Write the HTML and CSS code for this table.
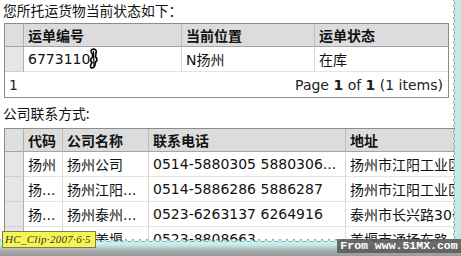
FILE: index.html
```html
<!DOCTYPE html>
<html>
<head>
<meta charset="utf-8">
<link rel="stylesheet" href="styles.css">
</head>
<body>
<div class="sheet">
  <div class="caption">您所托运货物当前状态如下：</div>
  <table class="grid g1">
    <colgroup><col class="c-ind"><col class="c-1a"><col class="c-1b"><col class="c-1c"></colgroup>
    <thead>
      <tr><th class="ind"></th><th>运单编号</th><th>当前位置</th><th>运单状态</th></tr>
    </thead>
    <tbody>
      <tr><td class="ind"></td><td><span class="num">6773110<svg class="cursor" width="10" height="21" viewBox="0 0 10 21"><path d="M3 1.5 C6 0.5 8 2 7 5 L6.5 9 C8.5 10 8.5 13 6.5 14 L6 17 C5.5 19.5 3.5 20.5 2 19.5 C1 18.5 2 16 3 14.5 C1 13 1.5 10 3.5 9.5 L3.5 6 C2 5 1.5 2.5 3 1.5 Z" fill="#fff" stroke="#000" stroke-width="1.6"/><path d="M4.5 3 L5 18" stroke="#000" stroke-width="1.2"/></svg></span></td><td>N扬州</td><td>在库</td></tr>
    </tbody>
    <tfoot>
      <tr><td colspan="4" class="pager"><div class="pager-row"><span>1</span><span>Page <b>1</b> of <b>1</b> (1 items)</span></div></td></tr>
    </tfoot>
  </table>
  <div class="caption caption2">公司联系方式:</div>
  <table class="grid g2">
    <colgroup><col class="c-ind"><col class="c-2a"><col class="c-2b"><col class="c-2c"><col class="c-2d"></colgroup>
    <thead>
      <tr><th class="ind"></th><th>代码</th><th>公司名称</th><th>联系电话</th><th>地址</th></tr>
    </thead>
    <tbody>
      <tr><td class="ind"></td><td>扬州</td><td>扬州公司</td><td>0514-5880305 5880306...</td><td>扬州市江阳工业区</td></tr>
      <tr><td class="ind"></td><td>扬...</td><td>扬州江阳...</td><td>0514-5886286 5886287</td><td>扬州市江阳工业区</td></tr>
      <tr><td class="ind"></td><td>扬...</td><td>扬州泰州...</td><td>0523-6263137 6264916</td><td>泰州市长兴路30号</td></tr>
      <tr><td class="ind"></td><td>扬...</td><td>扬州姜堰...</td><td>0523-8808663</td><td>姜堰市通扬东路</td></tr>
    </tbody>
  </table>
</div>
<div class="tear-right"></div>
<div class="tear-bottom"></div>
<div class="clip-label">HC_Clip·2007·6·5</div>
<div class="watermark">From www.51MX.com</div>
</body>
</html>
```
FILE: styles.css
```css
html, body {
  margin: 0;
  padding: 0;
}
body {
  width: 461px;
  height: 256px;
  overflow: hidden;
  position: relative;
  background: #fff;
  font-family: "DejaVu Sans", "Noto Sans CJK SC", sans-serif;
  color: #111;
}
.sheet {
  width: 461px;
  height: 256px;
  overflow: hidden;
  padding-left: 4px;
  box-sizing: border-box;
}
.caption {
  font-size: 13.8px;
  line-height: 20px;
  height: 23px;
  margin-left: -1px;
  font-family: "Noto Sans CJK SC", "DejaVu Sans", sans-serif;
}
.caption2 {
  height: 30px;
  line-height: 30px;
}
.grid {
  border-collapse: separate;
  border-spacing: 0;
  table-layout: fixed;
  border: 1px solid #8c8c8c;
  font-size: 14px;
}
.g1 { width: 445px; }
.g2 { width: 490px; }
.c-ind { width: 19px; }
.c-1a { width: 157px; }
.c-1b { width: 133px; }
.c-1c { width: 134px; }
.c-2a { width: 38px; }
.c-2b { width: 86px; }
.c-2c { width: 197px; }
.c-2d { width: 149px; }
.grid th, .grid td {
  box-sizing: border-box;
  padding: 0 0 0 4px;
  text-align: left;
  white-space: nowrap;
  overflow: hidden;
  vertical-align: middle;
}
.grid th {
  height: 23px;
  background: #dcdcdc;
  font-family: "Noto Sans CJK SC", sans-serif;
  font-weight: 700;
  font-size: 14px;
  color: #111;
  border-bottom: 1px solid #a4a4a4;
  border-left: 1px solid #bdbdbd;
}
.grid td {
  height: 25px;
  border-bottom: 1px solid #e4e4e4;
  border-left: 1px solid #d8d8d8;
  background: #fff;
}
.grid th.ind {
  border-left: none;
  background: #dedede;
  border-right: 1px solid #b0b0b0;
}
.grid td.ind {
  border-left: none;
  background: #e6e6e6;
  border-right: 1px solid #b0b0b0;
  border-bottom: 1px solid #d0d0d0;
}
.grid th.ind + th, .grid td.ind + td {
  border-left: none;
}
.num {
  position: relative;
  display: inline-block;
}
.cursor {
  position: absolute;
  left: 61px;
  top: -3px;
}
.pager {
  height: 25px;
  border-left: none !important;
  border-bottom: none !important;
  padding: 0 5px 0 4px !important;
  color: #222;
}
.pager-row {
  display: flex;
  justify-content: space-between;
  align-items: center;
}
.pager b {
  font-weight: 700;
}
.tear-right {
  position: absolute;
  top: 0;
  right: 0;
  width: 10px;
  height: 241px;
  background:
    radial-gradient(circle at 0 50%, transparent 3px, #8a9a98 3.4px, transparent 4.3px) 0 0 / 10px 6px repeat-y,
    linear-gradient(to right, #cdeee9, #bfe9e3);
  -webkit-mask: radial-gradient(circle at 0 50%, transparent 3px, #000 3.4px) 0 0 / 10px 6px repeat-y;
  mask: radial-gradient(circle at 0 50%, transparent 3px, #000 3.4px) 0 0 / 10px 6px repeat-y;
}
.tear-bottom {
  position: absolute;
  left: 0;
  bottom: 0;
  width: 461px;
  height: 18px;
  background:
    radial-gradient(circle at 50% 0, transparent 3px, #7f9593 3.4px, transparent 4.3px) 0 0 / 7px 6px repeat-x,
    linear-gradient(to bottom, #d8f6f2 0, #c2efe9 7px, #b6c9c7 10px, #a8a9a9 13px, #9a9a9a 18px);
  -webkit-mask: radial-gradient(circle at 50% 0, transparent 3px, #000 3.4px) 0 0 / 7px 100% repeat-x;
  mask: radial-gradient(circle at 50% 0, transparent 3px, #000 3.4px) 0 0 / 7px 100% repeat-x;
}
.clip-label {
  position: absolute;
  left: 2px;
  top: 231px;
  width: 94px;
  height: 17px;
  box-sizing: border-box;
  background: #f6f552;
  border: 1px solid #7a7a60;
  font-family: "Liberation Serif", serif;
  font-style: italic;
  font-size: 11px;
  line-height: 15px;
  color: #333;
  padding-left: 2px;
  letter-spacing: 0.3px;
  white-space: nowrap;
  overflow: hidden;
}
.watermark {
  position: absolute;
  right: 0;
  top: 239px;
  width: 124px;
  height: 14px;
  background: rgba(90, 90, 90, 0.88);
  color: #fff;
  font-family: "Liberation Mono", "DejaVu Sans Mono", monospace;
  font-weight: 700;
  font-size: 11.5px;
  line-height: 14px;
  text-align: center;
  white-space: nowrap;
}
```
